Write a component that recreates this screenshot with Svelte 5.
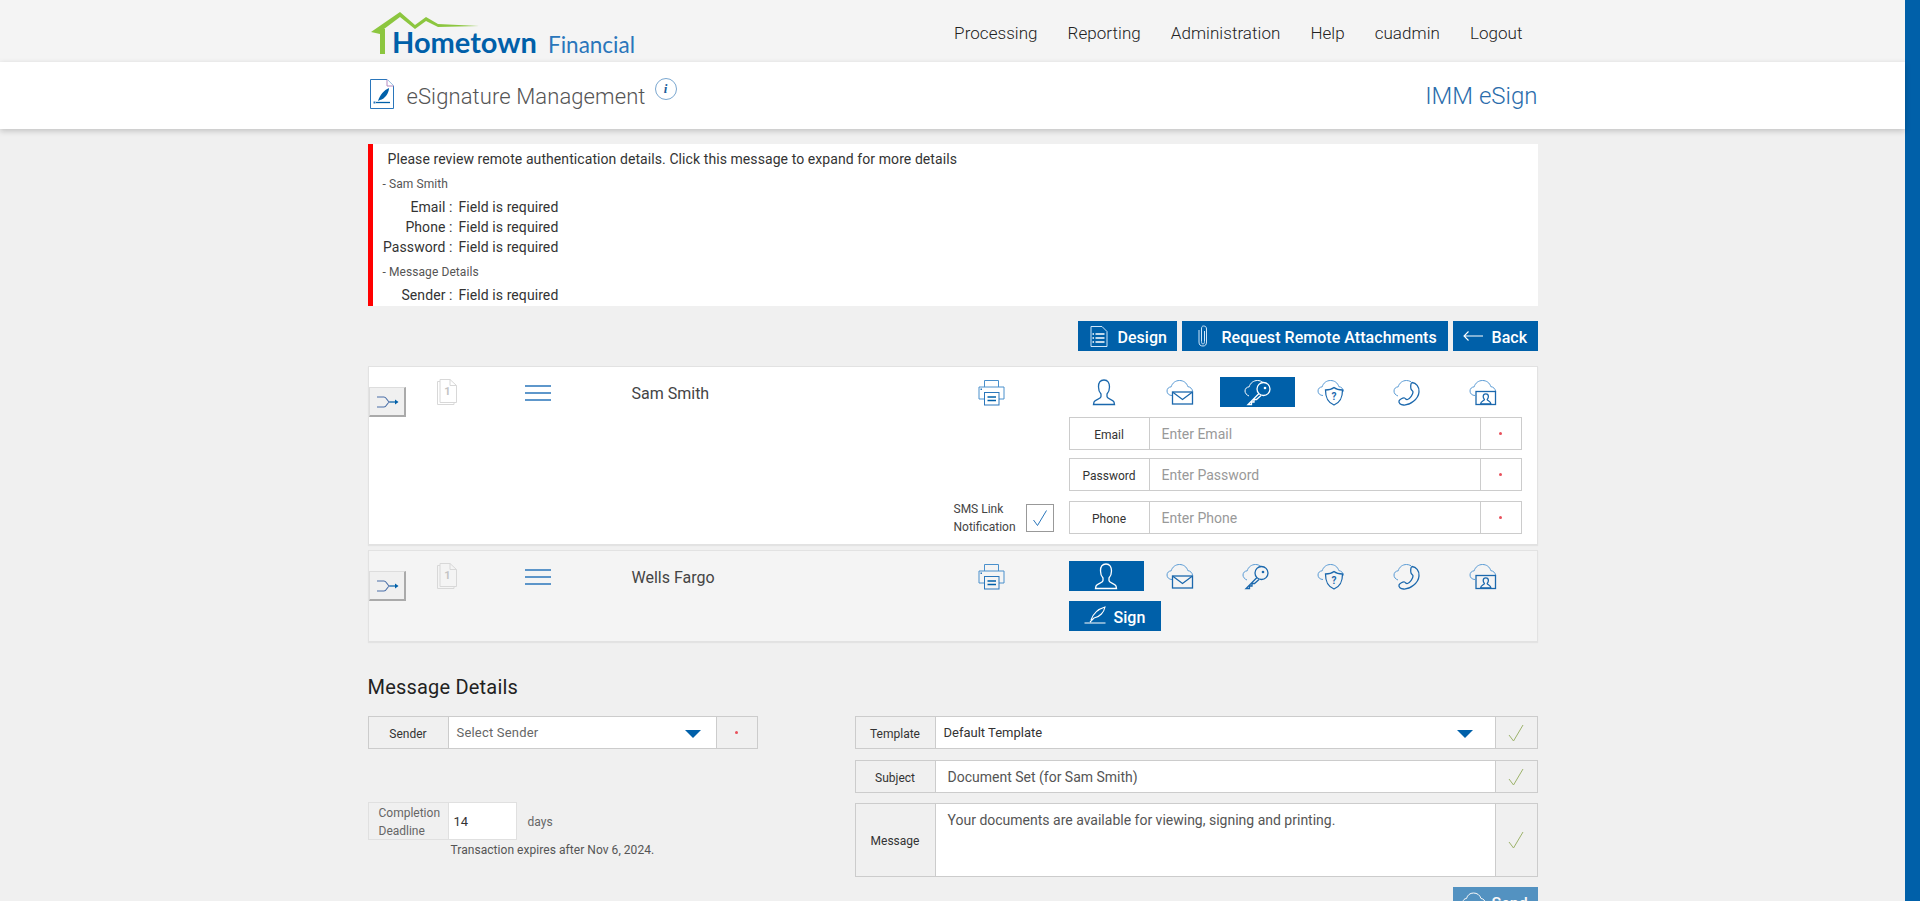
<script>
  const navItems = ['Processing', 'Reporting', 'Administration', 'Help', 'cuadmin', 'Logout'];
  const tabs = ['user', 'mail', 'key', 'shield', 'phone', 'video'];
  const errors = [
    { group: 'Sam Smith', fields: ['Email', 'Phone', 'Password'] },
    { group: 'Message Details', fields: ['Sender'] }
  ];
  const fields = ['Email', 'Password', 'Phone'];
</script>

{#snippet cloud()}
  <path class="cloud" d="M6 16.5C3 16.5 1 14.5 1 12C1 9.6 2.8 8 5.2 7.8C6.2 4 9.6 1.5 13.5 1.5C17.6 1.5 20.8 4 21.8 7.6C24.4 8 26.4 9.8 26.6 12.5" />
{/snippet}

{#snippet tabIcon(name)}
  {#if name === 'user'}
    <svg class="icon" width="24" height="27" viewBox="0 0 24 27">
      <path class="solid" d="M12 1C8 1 6.500 4 6.500 8C6.500 11 7.500 13.500 9 15V17.500C9 20 3 20.500 2 23L1.500 25.500H22.500L22 23C21 20.500 15 20 15 17.500V15C16.500 13.500 17.500 11 17.500 8C17.500 4 16 1 12 1Z" />
    </svg>
  {:else}
    <svg class="icon" width="28" height="27" viewBox="0 0 28 27">
      {#if name === 'mail'}
        {@render cloud()}
        <rect class="solid" x="6.500" y="13" width="20" height="12" />
        <path class="solid" d="M6.500 13L16.500 20.500L26.500 13" />
      {:else if name === 'key'}
        <path class="cloud" d="M5 17C2.500 16 1 14 1 12C1 9.600 2.800 8 5.200 7.800C6.200 4 9.600 1.500 13.500 1.500C15.500 1.500 17.500 2.200 19 3.500" />
        <circle class="solid" cx="19.500" cy="10" r="6.500" />
        <circle class="dot" cx="21" cy="9" r="1.300" />
        <path class="solid" d="M15 14.500L4 25.500H7.500V23H10V20.500H12.500L17 16.500" />
      {:else if name === 'shield'}
        {@render cloud()}
        <path class="solid" d="M17 8.500C19.500 10.500 22 11 25.500 11C25.500 18 24 23 17 26C10 23 8.500 18 8.500 11C12 11 14.500 10.500 17 8.500Z" />
        <text class="mark" x="17" y="21" text-anchor="middle">?</text>
      {:else if name === 'phone'}
        <path class="cloud" d="M5 17C2.500 16 1 14.500 1 12C1 9.600 2.800 8 5.200 7.800C6.200 4 9.600 1.500 13.500 1.500C15 1.500 16.500 1.900 18 2.700" />
        <path class="solid" d="M19 3.500C23 4 26.500 7.500 26 13C25.500 20 17 26.500 10.500 26C7.500 25.800 5.500 24 6 22C6.500 20.500 10 18.500 11.500 19C13 19.800 13 21 14.500 20.500C17 19.500 20 15.500 20 13C20 11.500 18.500 11.500 18 10C17.500 8.500 17.500 4 19 3.500Z" />
      {:else}
        {@render cloud()}
        <rect class="solid" x="7" y="12.500" width="19.500" height="13" />
        <path class="solid" d="M16.800 14.800C15 14.800 14.200 16 14.200 17.500C14.200 18.800 14.800 19.800 15.400 20.400C15.400 21.800 12 22 11.500 25H22C21.500 22 18.200 21.800 18.200 20.400C18.800 19.800 19.400 18.800 19.400 17.500C19.400 16 18.600 14.800 16.800 14.800Z" />
      {/if}
    </svg>
  {/if}
{/snippet}

{#snippet check()}
  <svg class="tick" width="16" height="18" viewBox="0 0 16 18">
    <path d="M1 11L5.500 17L15 1" />
  </svg>
{/snippet}

{#snippet required()}
  <div class="cell-end"><span class="req"></span></div>
{/snippet}

{#snippet recipient(name, selected)}
  <div class="row-left">
    <button class="route" aria-label="Route">
      <svg width="24" height="14" viewBox="0 0 24 14">
        <path d="M2 2H9C12 2 12 7 15 7C12 7 12 12 9 12H2" fill="none" stroke="#4a6fa8" stroke-width="1.100" />
        <path d="M15 7H22" stroke="#0060a9" stroke-width="1.200" />
        <path d="M20 4.500L23.500 7L20 9.500Z" fill="#0060a9" />
      </svg>
    </button>
  </div>
  <svg class="doc" width="22" height="27" viewBox="0 0 22 27">
    <path d="M4 1.500H14L20.500 7.500V24.500H4Z" fill="none" stroke="#d8d8d8" />
    <path d="M4 3.500H1.500V26.500H18V24.500M14 1.500V7.500H20.500" fill="none" stroke="#d8d8d8" />
    <text x="11.500" y="17" text-anchor="middle">1</text>
  </svg>
  <svg class="menu" width="26" height="16" viewBox="0 0 26 16">
    <path d="M0 1H26M0 8H26M0 15H26" stroke="#2a76bb" stroke-width="1.300" />
  </svg>
  <div class="name">{name}</div>
  <div class="mid">
    <svg class="printer" width="27" height="27" viewBox="0 0 27 27">
      <g fill="none" stroke="#4a90cc">
        <path d="M6.500 8V1.500H20.500V8" />
        <path d="M6 20H1V8H26V20H21" />
        <rect x="6.500" y="13.500" width="14.500" height="12.500" stroke="#2a76bb" />
      </g>
      <path d="M9.500 18H18M9.500 21.500H18" stroke="#0060a9" stroke-width="1.300" />
      <rect x="2.500" y="9.500" width="1.500" height="1.500" fill="#2a76bb" />
    </svg>
    {#if name === 'Sam Smith'}
      <div class="sms">
        <span>SMS Link<br />Notification</span>
        <span class="box">
          <svg width="16" height="18" viewBox="0 0 16 18"><path d="M1.500 11L5.500 16.500L14.500 1.500" fill="none" stroke="#2a76bb" /></svg>
        </span>
      </div>
    {/if}
  </div>
  <div class="right">
    <div class="tabs">
      {#each tabs as t}
        <div class="tab" class:on={t === selected}>{@render tabIcon(t)}</div>
      {/each}
    </div>
    {#if name === 'Sam Smith'}
      {#each fields as f}
        <div class="field">
          <div class="cell-label">{f}</div>
          <input class="cell-input" placeholder="Enter {f}" />
          {@render required()}
        </div>
      {/each}
    {:else}
      <button class="btn sign">
        <svg width="22" height="20" viewBox="0 0 22 20">
          <path d="M7 14C9 8 14 3 21 1C20 6 16 11 10 12L6 16M0.500 17H21.500" fill="none" stroke="#fff" stroke-width="1.100" />
        </svg>
        Sign
      </button>
    {/if}
  </div>
{/snippet}

<div class="page">
  <div class="main">
    <header class="top">
      <div class="wrap top-in">
        <svg class="logo" width="290" height="62" viewBox="0 0 290 62">
          <path d="M3 32L32 12L47 25L58 17L70 24L111 26L70 27L58 21L47 29L32 17L16 29H17V54H12V34Z" fill="#8cc63f" />
          <text class="lg-a" x="24" y="53">Hometown</text>
          <text class="lg-b" x="180" y="53">Financial</text>
        </svg>
        <nav>
          {#each navItems as item}
            <span>{item}</span>
          {/each}
        </nav>
      </div>
    </header>

    <div class="sub">
      <div class="wrap sub-in">
        <svg class="sub-doc" width="24" height="30" viewBox="0 0 24 30">
          <path d="M0.500 0.500H17L23.500 7V29.500H0.500Z" fill="#fff" stroke="#2a76bb" />
          <path d="M17 0.500V7H23.500" fill="#fff" stroke="#b58ac0" />
          <path d="M8 22C10 16 14 11 19 9C19 14 15 20 10 21Z" fill="#0060a9" />
          <path d="M6 23.500H20" stroke="#0060a9" stroke-width="1.300" />
          <rect x="3.500" y="22.500" width="2" height="2" fill="#2a76bb" />
        </svg>
        <h1>eSignature Management</h1>
        <span class="info">i</span>
        <div class="brand">IMM eSign</div>
      </div>
    </div>

    <div class="wrap content">
      <div class="alert">
        <div class="alert-title">Please review remote authentication details. Click this message to expand for more details</div>
        {#each errors as e}
          <div class="alert-group">- {e.group}</div>
          {#each e.fields as f}
            <div class="alert-line"><span class="alert-key">{f} :</span><span>Field is required</span></div>
          {/each}
        {/each}
      </div>

      <div class="actions">
        <button class="btn design">
          <svg width="18" height="21" viewBox="0 0 18 21" fill="none" stroke="#cfe6fa">
            <path d="M1 0.500H12L17 5.500V20.500H1Z" />
            <path d="M5.500 8H14.500M5.500 12H14.500M5.500 16H14.500" stroke="#fff" stroke-width="1.300" />
            <path d="M2.500 8H4M2.500 12H4M2.500 16H4" stroke="#fff" stroke-width="1.500" />
          </svg>
          Design
        </button>
        <button class="btn attach">
          <svg width="10" height="22" viewBox="0 0 10 22" fill="none" stroke="#cfe6fa">
            <path d="M6.500 6V16.500C6.500 18 6 19 5 19C4 19 3.500 18 3.500 16.500V4C3.500 2 4 1 5.500 1C7.500 1 8.500 2 8.500 4V17C8.500 20 7 21 5 21C2.500 21 1 20 1 17V5" />
          </svg>
          Request Remote Attachments
        </button>
        <button class="btn back">
          <svg width="20" height="10" viewBox="0 0 20 10" fill="none" stroke="#fff" stroke-width="1.100">
            <path d="M20 5H1M5.500 0.500L1 5L5.500 9.500" />
          </svg>
          Back
        </button>
      </div>

      <div class="row first">{@render recipient('Sam Smith', 'key')}</div>
      <div class="row second">{@render recipient('Wells Fargo', 'user')}</div>

      <h2>Message Details</h2>

      <div class="details">
        <div class="det-left">
          <div class="field grey">
            <div class="cell-label">Sender</div>
            <div class="cell-input select muted">
              Select Sender
              <span class="caret"></span>
            </div>
            {@render required()}
          </div>

          <div class="deadline">
            <div class="dl-label">Completion<br />Deadline</div>
            <div class="dl-input">14</div>
            <span class="days">days</span>
          </div>
          <div class="expires">Transaction expires after Nov 6, 2024.</div>
        </div>

        <div class="det-right">
          <div class="field grey">
            <div class="cell-label">Template</div>
            <div class="cell-input select dark">
              Default Template
              <span class="caret"></span>
            </div>
            <div class="cell-end">{@render check()}</div>
          </div>
          <div class="field grey">
            <div class="cell-label">Subject</div>
            <input class="cell-input text" value="Document Set (for Sam Smith)" />
            <div class="cell-end">{@render check()}</div>
          </div>
          <div class="field grey tall">
            <div class="cell-label">Message</div>
            <textarea class="cell-input text">Your documents are available for viewing, signing and printing.</textarea>
            <div class="cell-end">{@render check()}</div>
          </div>
          <div class="send-row">
            <button class="btn send">
              <svg width="24" height="20" viewBox="0 0 24 20" fill="none" stroke="#fff">
                <path d="M5 14C2.500 14 1 12 1 10C1 8 2.500 6.500 4.500 6.500C5.500 3 8 1 11.500 1C15 1 18 3 19 6.500C21.500 6.800 23 8.500 23 10.500" />
                <rect x="6" y="11" width="13" height="8" />
              </svg>
              Send
            </button>
          </div>
        </div>
      </div>
    </div>
  </div>
  <div class="rail"></div>
</div>

<style>
  :global(body) {
    margin: 0;
    background: #f0f0f0;
    font-family: Roboto, "Liberation Sans", sans-serif;
    color: #333;
  }

  .page {
    display: flex;
    height: 100vh;
    overflow: hidden;
  }
  .main {
    flex: 1;
    min-width: 0;
  }
  .rail {
    width: 15px;
    background: #0060a9;
  }
  .wrap {
    width: 1170px;
    margin: 0 auto;
  }

  .top {
    height: 62px;
    background: #f4f4f4;
  }
  .top-in {
    display: flex;
    justify-content: space-between;
    align-items: center;
    height: 62px;
  }
  .logo {
    display: block;
  }
  .lg-a {
    font: 700 29px Lato, sans-serif;
    fill: #0060a9;
  }
  .lg-b {
    font: 400 22.500px Lato, sans-serif;
    fill: #2a76bb;
  }
  nav {
    display: flex;
    gap: 30px;
    padding: 4px 15px 0 0;
    font-size: 17px;
    font-weight: 300;
    letter-spacing: 0.05px;
    color: #222;
  }

  .sub {
    height: 67px;
    background: #fff;
    box-shadow: 0 2px 6px rgba(0, 0, 0, 0.2);
    position: relative;
  }
  .sub-in {
    display: flex;
    align-items: center;
    height: 67px;
    position: relative;
  }
  .sub-doc {
    margin: -3px 0 0 2px;
  }
  h1 {
    margin: 1px 0 0 13px;
    font-size: 22px;
    font-weight: 300;
    letter-spacing: 0.1px;
    color: #555;
  }
  .info {
    width: 20px;
    height: 20px;
    margin: -14px 0 0 9px;
    border: 1px solid #7aa7d0;
    border-radius: 50%;
    text-align: center;
    font: italic 700 13px/20px "Liberation Serif", serif;
    color: #1d5f9c;
  }
  .brand {
    margin-left: auto;
    font-size: 24px;
    font-weight: 300;
    color: #2a6cab;
  }

  .content {
    padding-top: 15px;
  }
  .alert {
    height: 162px;
    box-sizing: border-box;
    background: #fff;
    border-left: 5px solid #f00;
    padding-left: 10px;
    font-size: 14px;
    letter-spacing: 0.08px;
    color: #333;
  }
  .alert-title {
    height: 30px;
    line-height: 30px;
    padding-left: 5px;
  }
  .alert-group {
    height: 20px;
    line-height: 20px;
    margin-bottom: 3px;
    font-size: 12px;
    color: #555;
  }
  .alert-line + .alert-group {
    margin-top: 5px;
  }
  .alert-line {
    display: flex;
    height: 20px;
    line-height: 20px;
    margin-left: -5px;
  }
  .alert-key {
    width: 75px;
    margin-right: 6px;
    text-align: right;
  }

  .actions {
    display: flex;
    justify-content: flex-end;
    gap: 5px;
    margin: 15px 0;
  }
  .btn {
    display: flex;
    align-items: center;
    height: 30px;
    padding: 3px 0 0;
    border: 0;
    background: #0060a9;
    color: #fff;
    font: 500 16px Roboto, sans-serif;
    letter-spacing: 0.04px;
  }
  .btn svg {
    margin-top: -3px;
  }
  .design {
    width: 99px;
    padding-left: 12px;
    gap: 10px;
  }
  .attach {
    width: 266px;
    padding-left: 16px;
    gap: 14px;
  }
  .back {
    width: 85px;
    padding-left: 10px;
    gap: 9px;
  }

  .row {
    display: grid;
    grid-template-columns: 68px 88px 107px 322px 115px 453px;
    box-sizing: border-box;
    border: 1px solid #e2e2e2;
    box-shadow: 0 1px 1px rgba(0, 0, 0, 0.05);
  }
  .first {
    height: 179px;
    background: #fff;
  }
  .second {
    height: 92px;
    margin-top: 5px;
    background: #f4f4f4;
  }
  .row-left {
    padding-top: 20px;
  }
  .route {
    display: flex;
    align-items: center;
    justify-content: center;
    width: 37px;
    height: 30px;
    padding: 0 0 0 1px;
    box-sizing: border-box;
    background: #f0f0f0;
    border: 1px solid #ddd;
    border-right: 2px solid #aaa;
    border-bottom: 2px solid #aaa;
  }
  .doc {
    margin: 11px 0 0 -1px;
  }
  .doc text {
    font: 700 11px Roboto, sans-serif;
    fill: #c4c4c4;
  }
  .menu {
    margin-top: 18px;
  }
  .name {
    margin-top: 17px;
    font-size: 16px;
    line-height: 20px;
    color: #444;
  }
  .mid {
    display: flex;
    flex-direction: column;
    align-items: flex-start;
    padding-bottom: 8px;
  }
  .printer {
    margin: 12px 0 0 24px;
  }
  .sms {
    display: flex;
    align-items: center;
    gap: 10px;
    margin-top: auto;
    font-size: 12px;
    line-height: 18px;
    color: #444;
  }
  .box {
    display: flex;
    align-items: center;
    justify-content: center;
    width: 26px;
    height: 26px;
    border: 1px solid #999;
    background: #fff;
  }
  .right {
    padding-top: 10px;
  }
  .tabs {
    display: grid;
    grid-template-columns: repeat(6, 1fr);
    width: 454px;
    margin-bottom: 10px;
  }
  .tab {
    display: flex;
    align-items: center;
    justify-content: center;
    height: 30px;
    padding-right: 4px;
    box-sizing: border-box;
    color: #1b68ad;
  }
  .tab.on {
    padding-right: 0;
    background: #0060a9;
    color: #fff;
  }
  .icon {
    overflow: visible;
    fill: none;
  }
  .icon :global(.solid) {
    stroke: currentColor;
    stroke-width: 1.300;
    fill: none;
  }
  .icon :global(.cloud) {
    fill: none;
    stroke: #5a9bd5;
    stroke-width: 1;
  }
  .tab.on .icon :global(.cloud) {
    stroke: #fff;
  }
  .icon :global(.dot) {
    fill: currentColor;
  }
  .icon :global(.mark) {
    font: 700 10px Roboto, sans-serif;
    fill: currentColor;
  }

  .field {
    display: flex;
    height: 33px;
    box-sizing: border-box;
    width: 453px;
    margin-bottom: 8px;
    border: 1px solid #ccc;
    background: #fff;
    font-size: 12px;
  }
  .field:nth-child(4) {
    margin-top: 10px;
  }
  .cell-label {
    display: flex;
    align-items: center;
    justify-content: center;
    flex: none;
    width: 80px;
    padding-top: 2px;
    box-sizing: border-box;
    border-right: 1px solid #ccc;
    font-size: 12px;
    color: #333;
  }
  .cell-input {
    flex: 1;
    min-width: 0;
    box-sizing: border-box;
    margin: 0;
    padding: 0 12px;
    border: 0;
    background: #fff;
    font: 14px Roboto, sans-serif;
    color: #555;
    outline: none;
  }
  .cell-input::placeholder {
    color: #999;
  }
  .cell-end {
    display: flex;
    align-items: center;
    justify-content: center;
    flex: none;
    width: 40px;
    border-left: 1px solid #ccc;
  }
  .req {
    width: 3px;
    height: 3px;
    border-radius: 50%;
    background: #e8505b;
  }

  .sign {
    width: 92px;
    padding-left: 15px;
    gap: 8px;
  }

  h2 {
    margin: 33px 0 17px;
    font-size: 20px;
    line-height: 24px;
    font-weight: 400;
    letter-spacing: 0.2px;
    color: #222;
  }
  .details {
    display: flex;
    justify-content: space-between;
  }
  .det-left {
    width: 390px;
  }
  .det-right {
    width: 683px;
  }
  .grey {
    width: auto;
    background: #f0f0f0;
    margin-bottom: 11px;
  }
  .select {
    display: flex;
    align-items: center;
    justify-content: space-between;
    padding: 0 15px 0 8px;
    font-size: 13px;
  }
  .muted {
    color: #666;
    letter-spacing: 0.2px;
  }
  .dark {
    color: #333;
  }
  .caret {
    width: 0;
    height: 0;
    margin-top: 3px;
    border-left: 8px solid transparent;
    border-right: 8px solid transparent;
    border-top: 8px solid #0060a9;
  }
  .det-right .select {
    padding-right: 22px;
  }
  .det-right .cell-end {
    width: 41px;
  }
  .tall {
    height: 74px;
    margin-bottom: 10px;
    margin-top: -1px;
  }
  .tall textarea {
    resize: none;
    padding-top: 8px;
    line-height: 16px;
  }
  .tick {
    fill: none;
    stroke: #9db36b;
    stroke-width: 1;
  }

  .deadline {
    display: flex;
    align-items: center;
    height: 38px;
    margin-top: 53px;
    font-size: 12px;
  }
  .dl-label {
    width: 81px;
    height: 100%;
    box-sizing: border-box;
    padding: 1px 0 0 10px;
    border: 1px solid #e0e0e0;
    line-height: 18px;
    color: #666;
  }
  .dl-input {
    width: 68px;
    height: 100%;
    box-sizing: border-box;
    padding-left: 5px;
    background: #fff;
    border: 1px solid #e0e0e0;
    border-left: 0;
    line-height: 38px;
    font-size: 13px;
    color: #333;
  }
  .days {
    margin: 2px 0 0 11px;
    color: #666;
  }
  .expires {
    margin: 2px 0 0 83px;
    font-size: 12px;
    line-height: 16px;
    letter-spacing: 0.05px;
    color: #555;
  }
  .send-row {
    display: flex;
    justify-content: flex-end;
  }
  .send {
    width: 85px;
    padding-left: 9px;
    gap: 6px;
    opacity: 0.65;
  }
</style>
